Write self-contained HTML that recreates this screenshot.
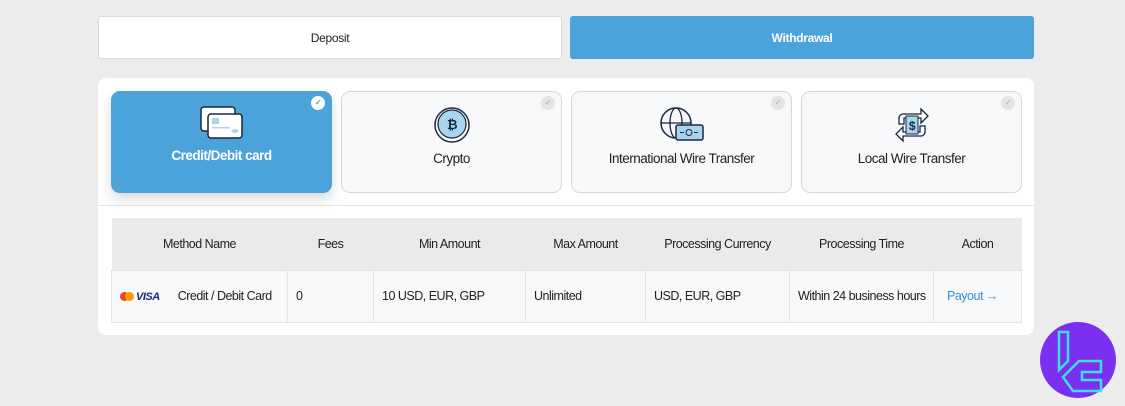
<!DOCTYPE html><html><head><style>
*{margin:0;padding:0;box-sizing:border-box}
body{width:1125px;height:406px;background:#ebecee;font-family:"Liberation Sans",sans-serif;position:relative;overflow:hidden;color:#222}
.tab{position:absolute;top:16px;height:43px;width:464px;border-radius:3px;display:flex;align-items:center;justify-content:center;font-size:12px;letter-spacing:-.3px}
.panel{position:absolute;left:98px;top:78px;width:936px;height:257px;background:#fff;border-radius:8px}
.card{position:absolute;top:91px;width:221px;height:102px;border:1px solid #d6d8db;border-radius:9px;background:#f7f8fa;text-align:center;font-size:13.5px;letter-spacing:-.5px}
.card svg{position:absolute;left:50%;transform:translateX(-50%);top:14px}
.card span{position:absolute;left:0;right:0;top:59px}
.chk{position:absolute;right:6px;top:4px;width:14px;height:14px;border-radius:50%;background:#e2e3e5;color:#aaa;font-size:8px;line-height:14px}
table{position:absolute;left:111px;top:218px;width:911px;border-collapse:collapse;font-size:12.5px;letter-spacing:-.5px}
th{background:#e9eaec;height:52px;font-weight:normal;color:#222}
td{background:#f7f8f9;height:52px;border:1px solid #e3e4e6;padding-left:8px;color:#222;white-space:nowrap}
</style></head><body>
<div class="tab" style="left:98px;background:#fff;border:1px solid #d8dadd">Deposit</div>
<div class="tab" style="left:570px;background:#4ba3d9;color:#fff;font-weight:bold">Withdrawal</div>
<div class="panel"></div>
<div style="position:absolute;left:98px;top:205px;width:936px;height:1px;background:#e3e4e6"></div>
<div class="card" style="left:111px;background:#4ba3d9;border-color:#4ba3d9;color:#fff;font-weight:bold;box-shadow:0 6px 12px rgba(0,0,0,.15)">
<svg width="44" height="36" viewBox="0 0 44 36"><rect x="1" y="1" width="34" height="24" rx="3" fill="#fff" stroke="#1a2740" stroke-width="1.5"/><rect x="8" y="8" width="34" height="24" rx="3" fill="#fff" stroke="#1a2740" stroke-width="1.5"/><rect x="12" y="12" width="7" height="6" fill="#a8d4ef"/><rect x="12" y="21" width="18" height="1.5" fill="#a8d4ef"/><ellipse cx="35" cy="25" rx="3.5" ry="2" fill="#a8d4ef"/></svg>
<span style="top:56px">Credit/Debit card</span><div class="chk" style="background:#fff;color:#4ba3d9">✓</div></div>
<div class="card" style="left:341px"><svg width="38" height="38" viewBox="0 0 38 38"><circle cx="19" cy="19" r="17" fill="#fff" stroke="#1a2740" stroke-width="1.5"/><circle cx="19" cy="18" r="14" fill="#a8d4ef" stroke="#1a2740" stroke-width="1.2"/><text x="19" y="23" text-anchor="middle" font-size="13" font-weight="bold" fill="#1a2740">₿</text></svg><span>Crypto</span><div class="chk">✓</div></div>
<div class="card" style="left:571px"><svg width="46" height="38" viewBox="0 0 46 38"><circle cx="17" cy="17" r="15" fill="none" stroke="#1a2740" stroke-width="1.5"/><ellipse cx="17" cy="17" rx="6" ry="15" fill="none" stroke="#1a2740" stroke-width="1.3"/><line x1="2" y1="17" x2="32" y2="17" stroke="#1a2740" stroke-width="1.3"/><rect x="17" y="19" width="27" height="15" rx="2" fill="#a8d4ef" stroke="#1a2740" stroke-width="1.5"/><circle cx="30" cy="26.5" r="3" fill="none" stroke="#1a2740"/><path d="M21 26.5h4M35 26.5h4" stroke="#1a2740"/></svg><span>International Wire Transfer</span><div class="chk">✓</div></div>
<div class="card" style="left:801px"><svg width="34" height="38" viewBox="0 0 34 38"><path d="M4 18V12a4 4 0 0 1 4-4h18V3l7 7-7 7v-5H9v6z" fill="#fff" stroke="#1a2740" stroke-width="1.3"/><path d="M30 20v6a4 4 0 0 1-4 4H8v5l-7-7 7-7v5h17v-6z" fill="#fff" stroke="#1a2740" stroke-width="1.3"/><rect x="11" y="10" width="12" height="18" fill="#a8d4ef" stroke="#1a2740"/><text x="17" y="24" text-anchor="middle" font-size="12" font-weight="bold" fill="#1a2740">$</text></svg><span>Local Wire Transfer</span><div class="chk">✓</div></div>
<table><tr><th style="width:176px">Method Name</th><th style="width:86px">Fees</th><th style="width:152px">Min Amount</th><th style="width:120px">Max Amount</th><th style="width:144px">Processing Currency</th><th style="width:144px">Processing Time</th><th>Action</th></tr>
<tr><td><span style="display:inline-block;width:9px;height:9px;border-radius:50%;background:#e42;vertical-align:middle"></span><span style="display:inline-block;width:9px;height:9px;border-radius:50%;background:#f90;margin-left:-4px;vertical-align:middle"></span><b style="color:#1a2a80;font-size:11px;font-style:italic;margin-left:2px">VISA</b><span style="margin-left:18px">Credit / Debit Card</span></td><td>0</td><td>10 USD, EUR, GBP</td><td>Unlimited</td><td>USD, EUR, GBP</td><td>Within 24 business hours</td><td style="color:#3a8fd0;padding-left:13px">Payout →</td></tr></table>
<svg style="position:absolute;left:1039px;top:321px" width="78" height="78" viewBox="0 0 78 78"><circle cx="39" cy="39" r="38" fill="#7b2ff0"/><path d="M20 11h9v29l-9 9z" fill="none" stroke="#3de0f0" stroke-width="2.5"/><path d="M24 56l16-16h22v11H43v8h19v11H34z" fill="none" stroke="#3de0f0" stroke-width="2.5"/></svg>
</body></html>
